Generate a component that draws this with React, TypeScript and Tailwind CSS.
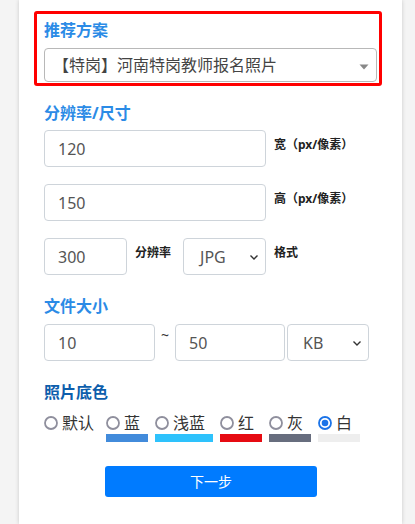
import React from "react";

const Chevron = () => (
  <svg width="10" height="10" viewBox="0 0 10 10" className="absolute right-[6px] top-1/2 -translate-y-1/2">
    <path d="M1.5 3.5 L5 7 L8.5 3.5" fill="none" stroke="#333" strokeWidth="1.4" />
  </svg>
);

const Radio = ({ checked }: { checked?: boolean }) =>
  checked ? (
    <svg width="14" height="14" viewBox="0 0 14 14" className="shrink-0">
      <circle cx="7" cy="7" r="6" fill="white" stroke="#1a73e8" strokeWidth="1.8" />
      <circle cx="7" cy="7" r="3.3" fill="#1a73e8" />
    </svg>
  ) : (
    <svg width="14" height="14" viewBox="0 0 14 14" className="shrink-0">
      <circle cx="7" cy="7" r="6" fill="white" stroke="#8f8f9d" strokeWidth="1.8" />
    </svg>
  );

const colors = [
  { label: "默认", w: "w-[55px]", bar: "" },
  { label: "蓝", w: "w-[42px]", bar: "bg-[#428bdb]" },
  { label: "浅蓝", w: "w-[58px]", bar: "bg-[#2ec2fc]" },
  { label: "红", w: "w-[42px]", bar: "bg-[#e60b12]" },
  { label: "灰", w: "w-[42px]", bar: "bg-[#676d7e]" },
  { label: "白", w: "w-[42px]", bar: "bg-[#eeeeee]", checked: true },
];

export default function App() {
  return (
    <div className="min-h-[524px] bg-[#f4f4f4] font-['Noto_Sans','Noto_Sans_CJK_SC',sans-serif]">
      <div className="ml-[19px] w-[383px] min-h-[524px] bg-white shadow-[0_0_4px_rgba(0,0,0,0.18)] pt-[11px]">
        {/* red box */}
        <div className="ml-[15px] w-[348px] border-[3px] border-[#ff0000] rounded-[3px] pl-[7px] pt-[5px] pb-[1px]">
          <div className="h-[22px] leading-[22px] text-[16px] font-bold text-[#2b8be6]">推荐方案</div>
          <div className="relative mt-[7px] w-[333px] h-[34px] border border-[#b8b8b8] rounded-[4px] pl-[8px] flex items-center text-[16px] text-[#444]">
            【特岗】河南特岗教师报名照片
            <svg width="10" height="6" viewBox="0 0 10 6" className="absolute right-[7px] top-[15px]">
              <path d="M0.5 0.5 L9.5 0.5 L5 5.5 Z" fill="#888" />
            </svg>
          </div>
        </div>

        <div className="pl-[25px]">
          <div className="mt-[16px] h-[22px] leading-[22px] text-[16px] font-bold text-[#2b8be6]">分辨率/尺寸</div>

          <div className="mt-[6px] flex items-start gap-[8px]">
            <div className="w-[222px] h-[37px] border border-[#ced4da] rounded-[4px] px-[13px] flex items-center text-[16px] text-[#555]">120</div>
            <div className="pt-[7px] text-[12px] leading-[16px] font-bold text-[#222]">宽（px/像素）</div>
          </div>

          <div className="mt-[17px] flex items-start gap-[8px]">
            <div className="w-[222px] h-[37px] border border-[#ced4da] rounded-[4px] px-[13px] flex items-center text-[16px] text-[#555]">150</div>
            <div className="pt-[7px] text-[12px] leading-[16px] font-bold text-[#222]">高（px/像素）</div>
          </div>

          <div className="mt-[17px] flex items-start">
            <div className="w-[83px] h-[37px] border border-[#ced4da] rounded-[4px] px-[13px] flex items-center text-[16px] text-[#555]">300</div>
            <div className="ml-[8px] pt-[7px] text-[12px] leading-[16px] font-bold text-[#222]">分辨率</div>
            <div className="relative ml-[12px] w-[83px] h-[37px] border border-[#ced4da] rounded-[4px] pl-[16px] flex items-center text-[16px] text-[#555]">
              JPG
              <Chevron />
            </div>
            <div className="ml-[8px] pt-[7px] text-[12px] leading-[16px] font-bold text-[#222]">格式</div>
          </div>

          <div className="mt-[20px] h-[22px] leading-[22px] text-[16px] font-bold text-[#2b8be6]">文件大小</div>

          <div className="mt-[7px] flex items-start">
            <div className="w-[111px] h-[37px] border border-[#ced4da] rounded-[4px] px-[13px] flex items-center text-[16px] text-[#555]">10</div>
            <div className="w-[20px] text-center text-[14px] leading-[20px] text-[#333] pt-[1px]">~</div>
            <div className="w-[110px] h-[37px] border border-[#ced4da] rounded-[4px] px-[13px] flex items-center text-[16px] text-[#555]">50</div>
            <div className="relative ml-[2px] w-[82px] h-[37px] border border-[#ced4da] rounded-[4px] pl-[15px] flex items-center text-[16px] text-[#555]">
              KB
              <Chevron />
            </div>
          </div>

          <div className="mt-[20px] h-[22px] leading-[22px] text-[16px] font-bold text-[#0d5eac]">照片底色</div>

          <div className="mt-[10px] flex gap-[7px]">
            {colors.map((c) => (
              <div key={c.label} className={`${c.w} flex flex-col`}>
                <div className="h-[20px] flex items-center gap-[4px] text-[16px] leading-[20px] text-[#333]">
                  <Radio checked={c.checked} />
                  <span>{c.label}</span>
                </div>
                <div className={`mt-[1px] h-[8px] ${c.bar}`} />
              </div>
            ))}
          </div>

          <div className="mt-[24px] ml-[61px] w-[212px] h-[31px] rounded-[3px] bg-[#007bff] flex items-center justify-center text-[14px] text-white">
            下一步
          </div>
        </div>
      </div>
    </div>
  );
}
